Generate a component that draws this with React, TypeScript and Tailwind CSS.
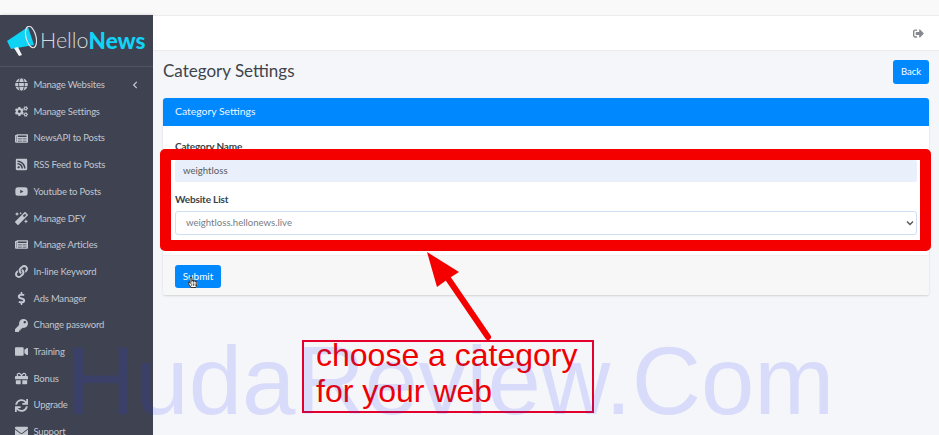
import React from "react";
import { FaGlobe, FaCogs, FaNewspaper, FaRssSquare, FaYoutube, FaMagic, FaLink, FaDollarSign, FaKey, FaVideo, FaGift, FaSync, FaEnvelope, FaSignOutAlt, FaChevronLeft, FaHandPointer, FaRegHandPointer } from "react-icons/fa";

const items: [React.ComponentType<{ className?: string }>, string][] = [
  [FaGlobe, "Manage Websites"],
  [FaCogs, "Manage Settings"],
  [FaNewspaper, "NewsAPI to Posts"],
  [FaRssSquare, "RSS Feed to Posts"],
  [FaYoutube, "Youtube to Posts"],
  [FaMagic, "Manage DFY"],
  [FaNewspaper, "Manage Articles"],
  [FaLink, "In-line Keyword"],
  [FaDollarSign, "Ads Manager"],
  [FaKey, "Change password"],
  [FaVideo, "Training"],
  [FaGift, "Bonus"],
  [FaSync, "Upgrade"],
  [FaEnvelope, "Support"],
];

function Logo() {
  return (
    <div className="flex h-[52px] items-center border-b border-[#4f5562] pl-[7px] pt-[1px] shrink-0">
      <svg width="30" height="31" viewBox="0 0 30 31" className="shrink-0">
        <path d="M0 15 L21 1 L27 19 L4 23 Z" fill="#0fd3f5" />
        <path d="M7 22 L12 30 L15 29 L11 21 Z" fill="#f2f4f6" />
        <ellipse cx="24" cy="11" rx="5" ry="11" fill="none" stroke="#dfe3e8" strokeWidth="1.2" transform="rotate(-14 24 11)" />
      </svg>
      <span className="ml-[3px] text-[21.5px] leading-none font-light text-[#d5d8dd]">Hello</span>
      <span className="text-[22.5px] leading-none font-black text-[#12d2f7]">News</span>
    </div>
  );
}

export default function App() {
  return (
    <div className="relative h-[435px] w-[939px] overflow-hidden bg-[#f9f9fa] pt-[15px] font-['Lato',sans-serif]">
      <div className="flex h-[420px]">
        <aside className="flex w-[153px] shrink-0 flex-col overflow-hidden bg-[#3e4251] shadow-[1px_0_3px_rgba(0,0,0,0.2)]">
          <Logo />
          <nav className="flex flex-col pt-[4.5px]">
            {items.map(([Icon, label], i) => (
              <div key={label} className="flex h-[26.7px] shrink-0 items-center pl-[15px] pr-[14px] text-[#c2c7d0]">
                <span className="flex w-[18.5px] shrink-0 justify-start"><Icon className="text-[13px]" /></span>
                <span className="text-[9.5px] leading-none tracking-[-0.2px] whitespace-nowrap">{label}</span>
                {i === 0 && <FaChevronLeft className="ml-auto text-[8px]" />}
              </div>
            ))}
          </nav>
        </aside>
        <main className="flex min-w-0 flex-1 flex-col bg-[#f5f6fa]">
          <header className="flex h-[36px] shrink-0 items-center justify-end border-y border-[#ececee] bg-white pr-[15px]">
            <FaSignOutAlt className="text-[11px] text-[#85888c]" />
          </header>
          <div className="flex items-start justify-between px-[10px] pt-[9px]">
            <h1 className="mt-[-1px] text-[17px] leading-[24px] font-normal text-[#3f444b]">Category Settings</h1>
            <button className="h-[24px] w-[36px] rounded-[3px] bg-[#0088ff] text-[9.5px] text-white">Back</button>
          </div>
          <section className="mx-[10px] mt-[14px] rounded-[3px] bg-white shadow-[0_1px_2px_rgba(0,0,0,0.15)]">
            <div className="flex h-[28px] items-center rounded-t-[3px] bg-[#0088ff] px-[12px] text-[10.4px] text-[#eef7ff]">Category Settings</div>
            <div className="px-[12px] pt-[13px]">
              <label className="block text-[10px] leading-[14px] font-bold tracking-[-0.15px] text-[#3a3f45]">Category Name</label>
              <div className="mt-[7px] flex h-[22px] items-center rounded-[2px] bg-[#e9f0fb] px-[8px] text-[9.6px] text-[#555b63]">weightloss</div>
              <label className="mt-[10px] block text-[10px] leading-[14px] font-bold tracking-[-0.15px] text-[#3a3f45]">Website List</label>
              <div className="mt-[5px] flex h-[24px] items-center justify-between rounded-[3px] border border-[#cfe0f3] bg-white pl-[10px] pr-[2px] text-[9.6px] text-[#777c83]">
                weightloss.hellonews.live
                <svg width="8" height="6" viewBox="0 0 8 6"><path d="M1 1.5 L4 4.5 L7 1.5" fill="none" stroke="#555" strokeWidth="1.4" /></svg>
              </div>
            </div>
            <div className="mt-[20px] flex h-[40px] items-start rounded-b-[3px] border-t border-[#f0f0f0] bg-[#f7f7f7] px-[12px] pt-[9px]">
              <button className="h-[23px] w-[46px] rounded-[3px] bg-[#0088ff] text-[10px] text-white">Submit</button>
            </div>
          </section>
        </main>
      </div>

      {/* annotations */}
      <div className="pointer-events-none absolute left-[160px] top-[149px] h-[102px] w-[771px] rounded-[5px] border-[11px] border-[#f50000]" />
      <svg className="pointer-events-none absolute left-[415px] top-[245px]" width="90" height="100" viewBox="0 0 90 100">
        <path d="M12 7 L44 27 L33 34 L22 42 Z" fill="#f50000" />
        <path d="M32 32 L73 92" stroke="#f50000" strokeWidth="6" strokeLinecap="round" />
      </svg>
      <div className="absolute left-[302px] top-[340px] h-[73px] w-[292px] border-[2px] border-[#e4002c] pl-[12px] font-['Liberation_Sans',sans-serif] text-[32px] leading-[36px] text-[#f00000]">
        <div className="mt-[-5px]">choose a category</div>
        <div>for your web</div>
      </div>

      {/* watermark */}
      <div className="pointer-events-none absolute left-[66px] top-[325px] font-['Liberation_Sans',sans-serif] text-[96px] leading-[111px] whitespace-nowrap text-[rgba(40,55,250,0.14)]">HudaReview.Com</div>

      <span className="absolute left-[187px] top-[277px] text-[11px]">
        <FaHandPointer className="text-white" />
        <FaRegHandPointer className="absolute inset-0 text-[#333]" />
      </span>
    </div>
  );
}
